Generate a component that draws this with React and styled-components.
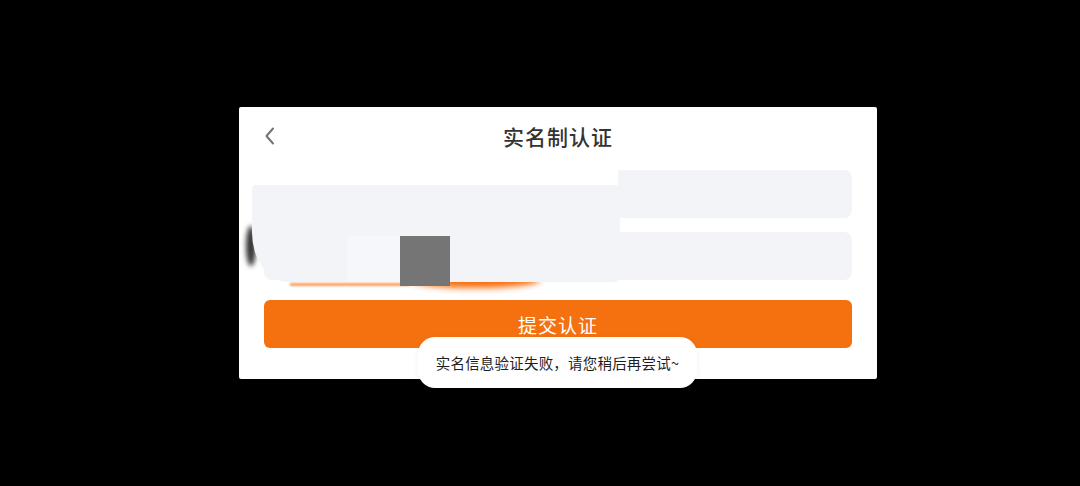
import React from 'react';
import styled, { createGlobalStyle } from 'styled-components';

const GlobalStyle = createGlobalStyle`
  html, body {
    margin: 0;
    padding: 0;
    background: #000;
    font-family: "Noto Sans CJK SC", "Noto Sans", sans-serif;
  }
`;

const Screen = styled.div`
  width: 1080px;
  height: 486px;
  background: #000;
  padding: 107px 0 0 239px;
  box-sizing: border-box;
  position: relative;
  overflow: hidden;
`;

const Card = styled.div`
  width: 638px;
  height: 272px;
  background: #fff;
  border-radius: 2px;
  box-sizing: border-box;
  padding: 0 25px;
  display: flex;
  flex-direction: column;
  position: relative;
`;

const Header = styled.div`
  height: 56px;
  display: flex;
  align-items: center;
  justify-content: center;
  position: relative;
  margin-top: 1px;
`;

const BackButton = styled.button`
  position: absolute;
  left: -1px;
  top: 50%;
  transform: translateY(-50%);
  background: none;
  border: none;
  padding: 0;
  display: flex;
  align-items: center;
  cursor: pointer;
`;

const Title = styled.h1`
  margin: 0;
  font-size: 21px;
  font-weight: 500;
  color: #333;
  letter-spacing: 1px;
`;

const Form = styled.div`
  display: flex;
  flex-direction: column;
  gap: 14px;
  margin-top: 6px;
`;

const Field = styled.div`
  height: 48px;
  border-radius: 8px;
  background: #f3f4f8;
`;

const SubmitButton = styled.button`
  margin-top: 20px;
  height: 48px;
  border: none;
  border-radius: 6px;
  background: #f5700f;
  color: #fff;
  font-family: inherit;
  font-size: 19px;
  letter-spacing: 1px;
  padding: 0;
`;

/* smudges left over from a redacted area in the screenshot */
const Patch = styled.div`
  position: absolute;
  left: ${p => p.x}px;
  top: ${p => p.y}px;
  width: ${p => p.w}px;
  height: ${p => p.h}px;
  background: ${p => p.bg};
  border-radius: ${p => p.radius || '0'};
  filter: ${p => (p.blur ? `blur(${p.blur}px)` : 'none')};
`;

const Toast = styled.div`
  position: absolute;
  left: 418px;
  top: 337px;
  width: 279px;
  height: 51px;
  box-sizing: border-box;
  border-radius: 17px;
  background: #fff;
  box-shadow: 0 2px 6px rgba(0, 0, 0, 0.06);
  display: flex;
  align-items: center;
  justify-content: center;
  font-size: 14.5px;
  letter-spacing: 0.2px;
  color: #1e1e1e;
  white-space: nowrap;
`;

const ChevronLeft = () => (
  <svg width="14" height="20" viewBox="0 0 14 20" fill="none">
    <path d="M10 2.5 L3.5 10 L10 17.5" stroke="#737373" strokeWidth="2" strokeLinecap="round" strokeLinejoin="round" />
  </svg>
);

export default function App() {
  return (
    <>
      <GlobalStyle />
      <Screen>
        <Card>
          <Header>
            <BackButton aria-label="返回">
              <ChevronLeft />
            </BackButton>
            <Title>实名制认证</Title>
          </Header>
          <Form>
            <Field />
            <Field />
          </Form>
          <SubmitButton>提交认证</SubmitButton>
        </Card>

        <Patch x={290} y={283} w={120} h={3} bg="#f7a060" blur={1} />
        <Patch x={410} y={272} w={130} h={16} bg="#f5700f" radius="50%" blur={3} />
        <Patch x={246} y={226} w={10} h={40} bg="#333" radius="50%" blur={2.5} />
        <Patch x={264} y={166} w={354} h={19} bg="#fff" />
        <Patch x={252} y={185} w={368} h={97} bg="#f3f4f8" radius="4px 6px 6px 36px / 4px 6px 6px 50px" />
        <Patch x={347} y={236} w={53} h={46} bg="#f6f7fa" />
        <Patch x={400} y={236} w={50} h={50} bg="#757575" />

        <Toast>实名信息验证失败，请您稍后再尝试~</Toast>
      </Screen>
    </>
  );
}
